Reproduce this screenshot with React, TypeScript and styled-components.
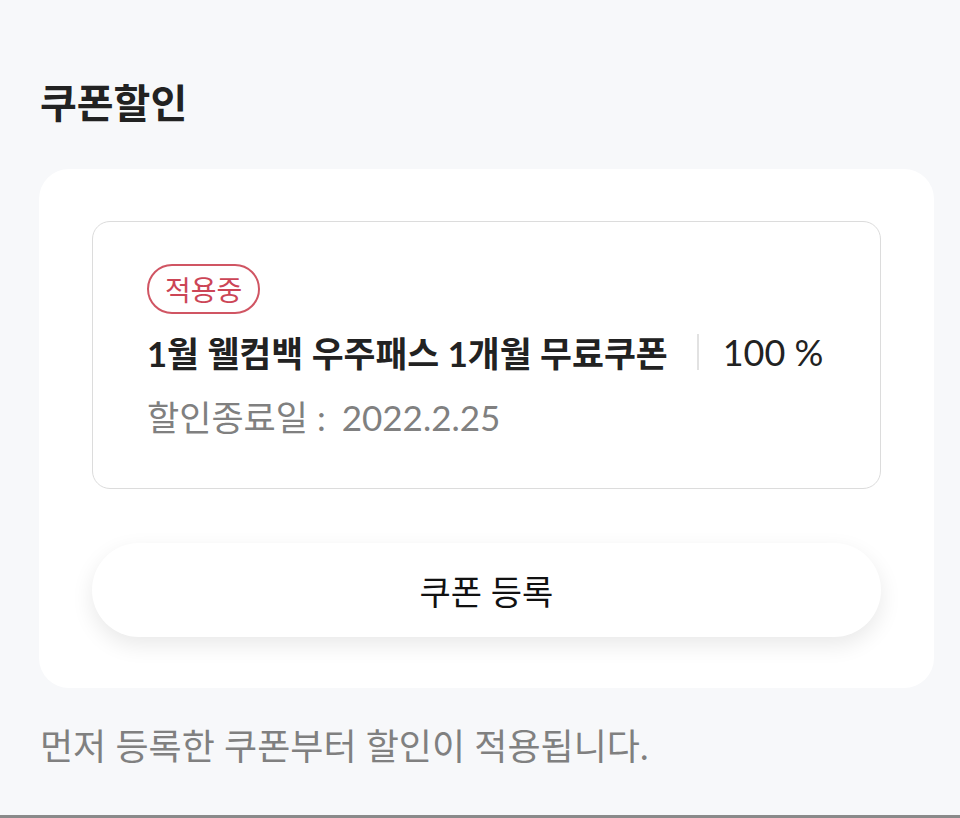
import styled, { createGlobalStyle } from "styled-components";

const GlobalStyle = createGlobalStyle`
  html, body {
    margin: 0;
    padding: 0;
    background: #f7f8fa;
  }
  body {
    font-family: Lato, "Noto Sans CJK KR", sans-serif;
    color: #222;
  }
`;

const Page = styled.div`
  height: 818px;
  box-sizing: border-box;
  padding: 76px 26px 0 39px;
  border-bottom: 3px solid #8a8a8a;
  display: flex;
  flex-direction: column;
`;

const Title = styled.h2`
  margin: 0 0 0 1px;
  font-size: 40px;
  font-weight: 700;
  line-height: 54px;
  color: #222;
`;

const Panel = styled.section`
  margin-top: 39px;
  background: #fff;
  border-radius: 30px;
  padding: 52px 53px 51px;
  display: flex;
  flex-direction: column;
  gap: 54px;
`;

const CouponBox = styled.div`
  border: 1.5px solid #dcdcdc;
  border-radius: 18px;
  padding: 42px 54px 47px 54px;
  display: flex;
  flex-direction: column;
  align-items: flex-start;
`;

const Badge = styled.span`
  display: inline-flex;
  align-items: center;
  justify-content: center;
  height: 50px;
  box-sizing: border-box;
  padding: 0 16px;
  border: 2px solid #d05563;
  border-radius: 25px;
  color: #cc4556;
  font-size: 28px;
  font-weight: 400;
`;

const CouponRow = styled.div`
  margin-top: 10px;
  display: flex;
  align-items: center;
  height: 56px;
`;

const CouponName = styled.span`
  font-size: 34.7px;
  font-weight: 700;
  color: #222;
`;

const Divider = styled.span`
  width: 2px;
  height: 36px;
  background: #e2e2e2;
  margin: 0 24px 0 29px;
`;

const Percent = styled.span`
  font-size: 36px;
  font-weight: 400;
  color: #222;
`;

const Expire = styled.div`
  margin-top: 13px;
  font-size: 35px;
  line-height: 48px;
  color: #808080;
  display: flex;
  gap: 16px;
`;

const RegisterButton = styled.button`
  height: 94px;
  border: none;
  border-radius: 47px;
  background: #fff;
  box-shadow: 0 8px 22px rgba(0, 0, 0, 0.09);
  font-family: Lato, "Noto Sans CJK KR", sans-serif;
  font-size: 34px;
  color: #111;
  cursor: pointer;
`;

const Note = styled.p`
  margin: 34px 0 0 1px;
  font-size: 36px;
  line-height: 48px;
  color: #808080;
`;

export default function App() {
  return (
    <>
      <GlobalStyle />
      <Page>
        <Title>쿠폰할인</Title>
        <Panel>
          <CouponBox>
            <Badge>적용중</Badge>
            <CouponRow>
              <CouponName>1월 웰컴백 우주패스 1개월 무료쿠폰</CouponName>
              <Divider />
              <Percent>100 %</Percent>
            </CouponRow>
            <Expire>
              <span>할인종료일 :</span>
              <span>2022.2.25</span>
            </Expire>
          </CouponBox>
          <RegisterButton>쿠폰 등록</RegisterButton>
        </Panel>
        <Note>먼저 등록한 쿠폰부터 할인이 적용됩니다.</Note>
      </Page>
    </>
  );
}
